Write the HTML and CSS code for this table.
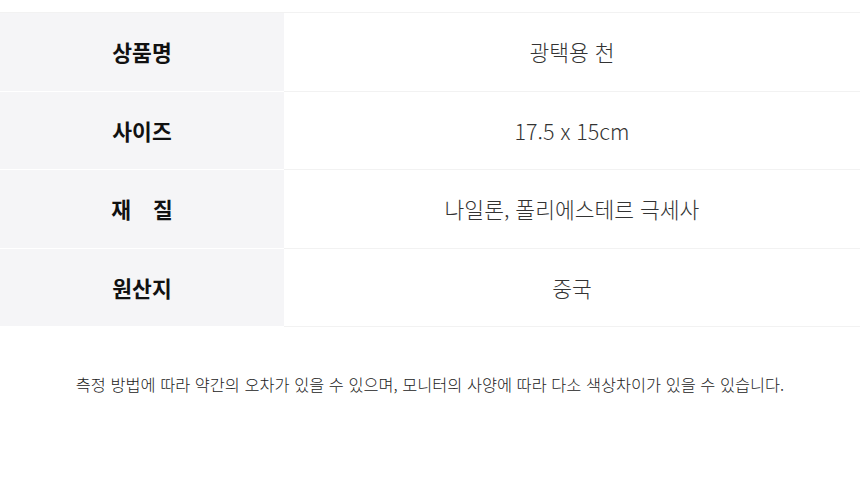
FILE: index.html
```html
<!DOCTYPE html>
<html lang="ko">
<head>
<meta charset="utf-8">
<link rel="stylesheet" href="styles.css">
</head>
<body>
<div class="page">
  <table class="spec">
    <tr><th>상품명</th><td>광택용 천</td></tr>
    <tr><th>사이즈</th><td>17.5 x 15cm</td></tr>
    <tr><th><span class="wide">재</span>질</th><td>나일론, 폴리에스테르 극세사</td></tr>
    <tr><th>원산지</th><td>중국</td></tr>
  </table>
  <p class="note">측정 방법에 따라 약간의 오차가 있을 수 있으며, 모니터의 사양에 따라 다소 색상차이가 있을 수 있습니다.</p>
</div>
</body>
</html>
```

FILE: styles.css
```css
html, body {
  margin: 0;
  padding: 0;
  background: #fff;
}
.page {
  padding-top: 12px;
  font-family: "Noto Sans CJK KR", "Noto Sans", sans-serif;
}
.spec {
  width: 100%;
  border-collapse: collapse;
  border-top: 1px solid #f2f2f2;
}
.spec th, .spec td {
  height: 77.6px;
  padding: 0;
  text-align: center;
  vertical-align: middle;
  font-size: 21.5px;
  line-height: 1;
}
.spec th {
  width: 284px;
  background: #f5f5f7;
  color: #111;
  font-weight: 700;
  border-bottom: 1px solid #fff;
}
.spec td {
  color: #333;
  font-weight: 300;
  border-bottom: 1px solid #f2f2f2;
}
.wide {
  display: inline-block;
  margin-right: 22px;
}
.note {
  margin: 45px 0 0;
  text-align: center;
  font-size: 16.35px;
  font-weight: 300;
  color: #222;
}
```
